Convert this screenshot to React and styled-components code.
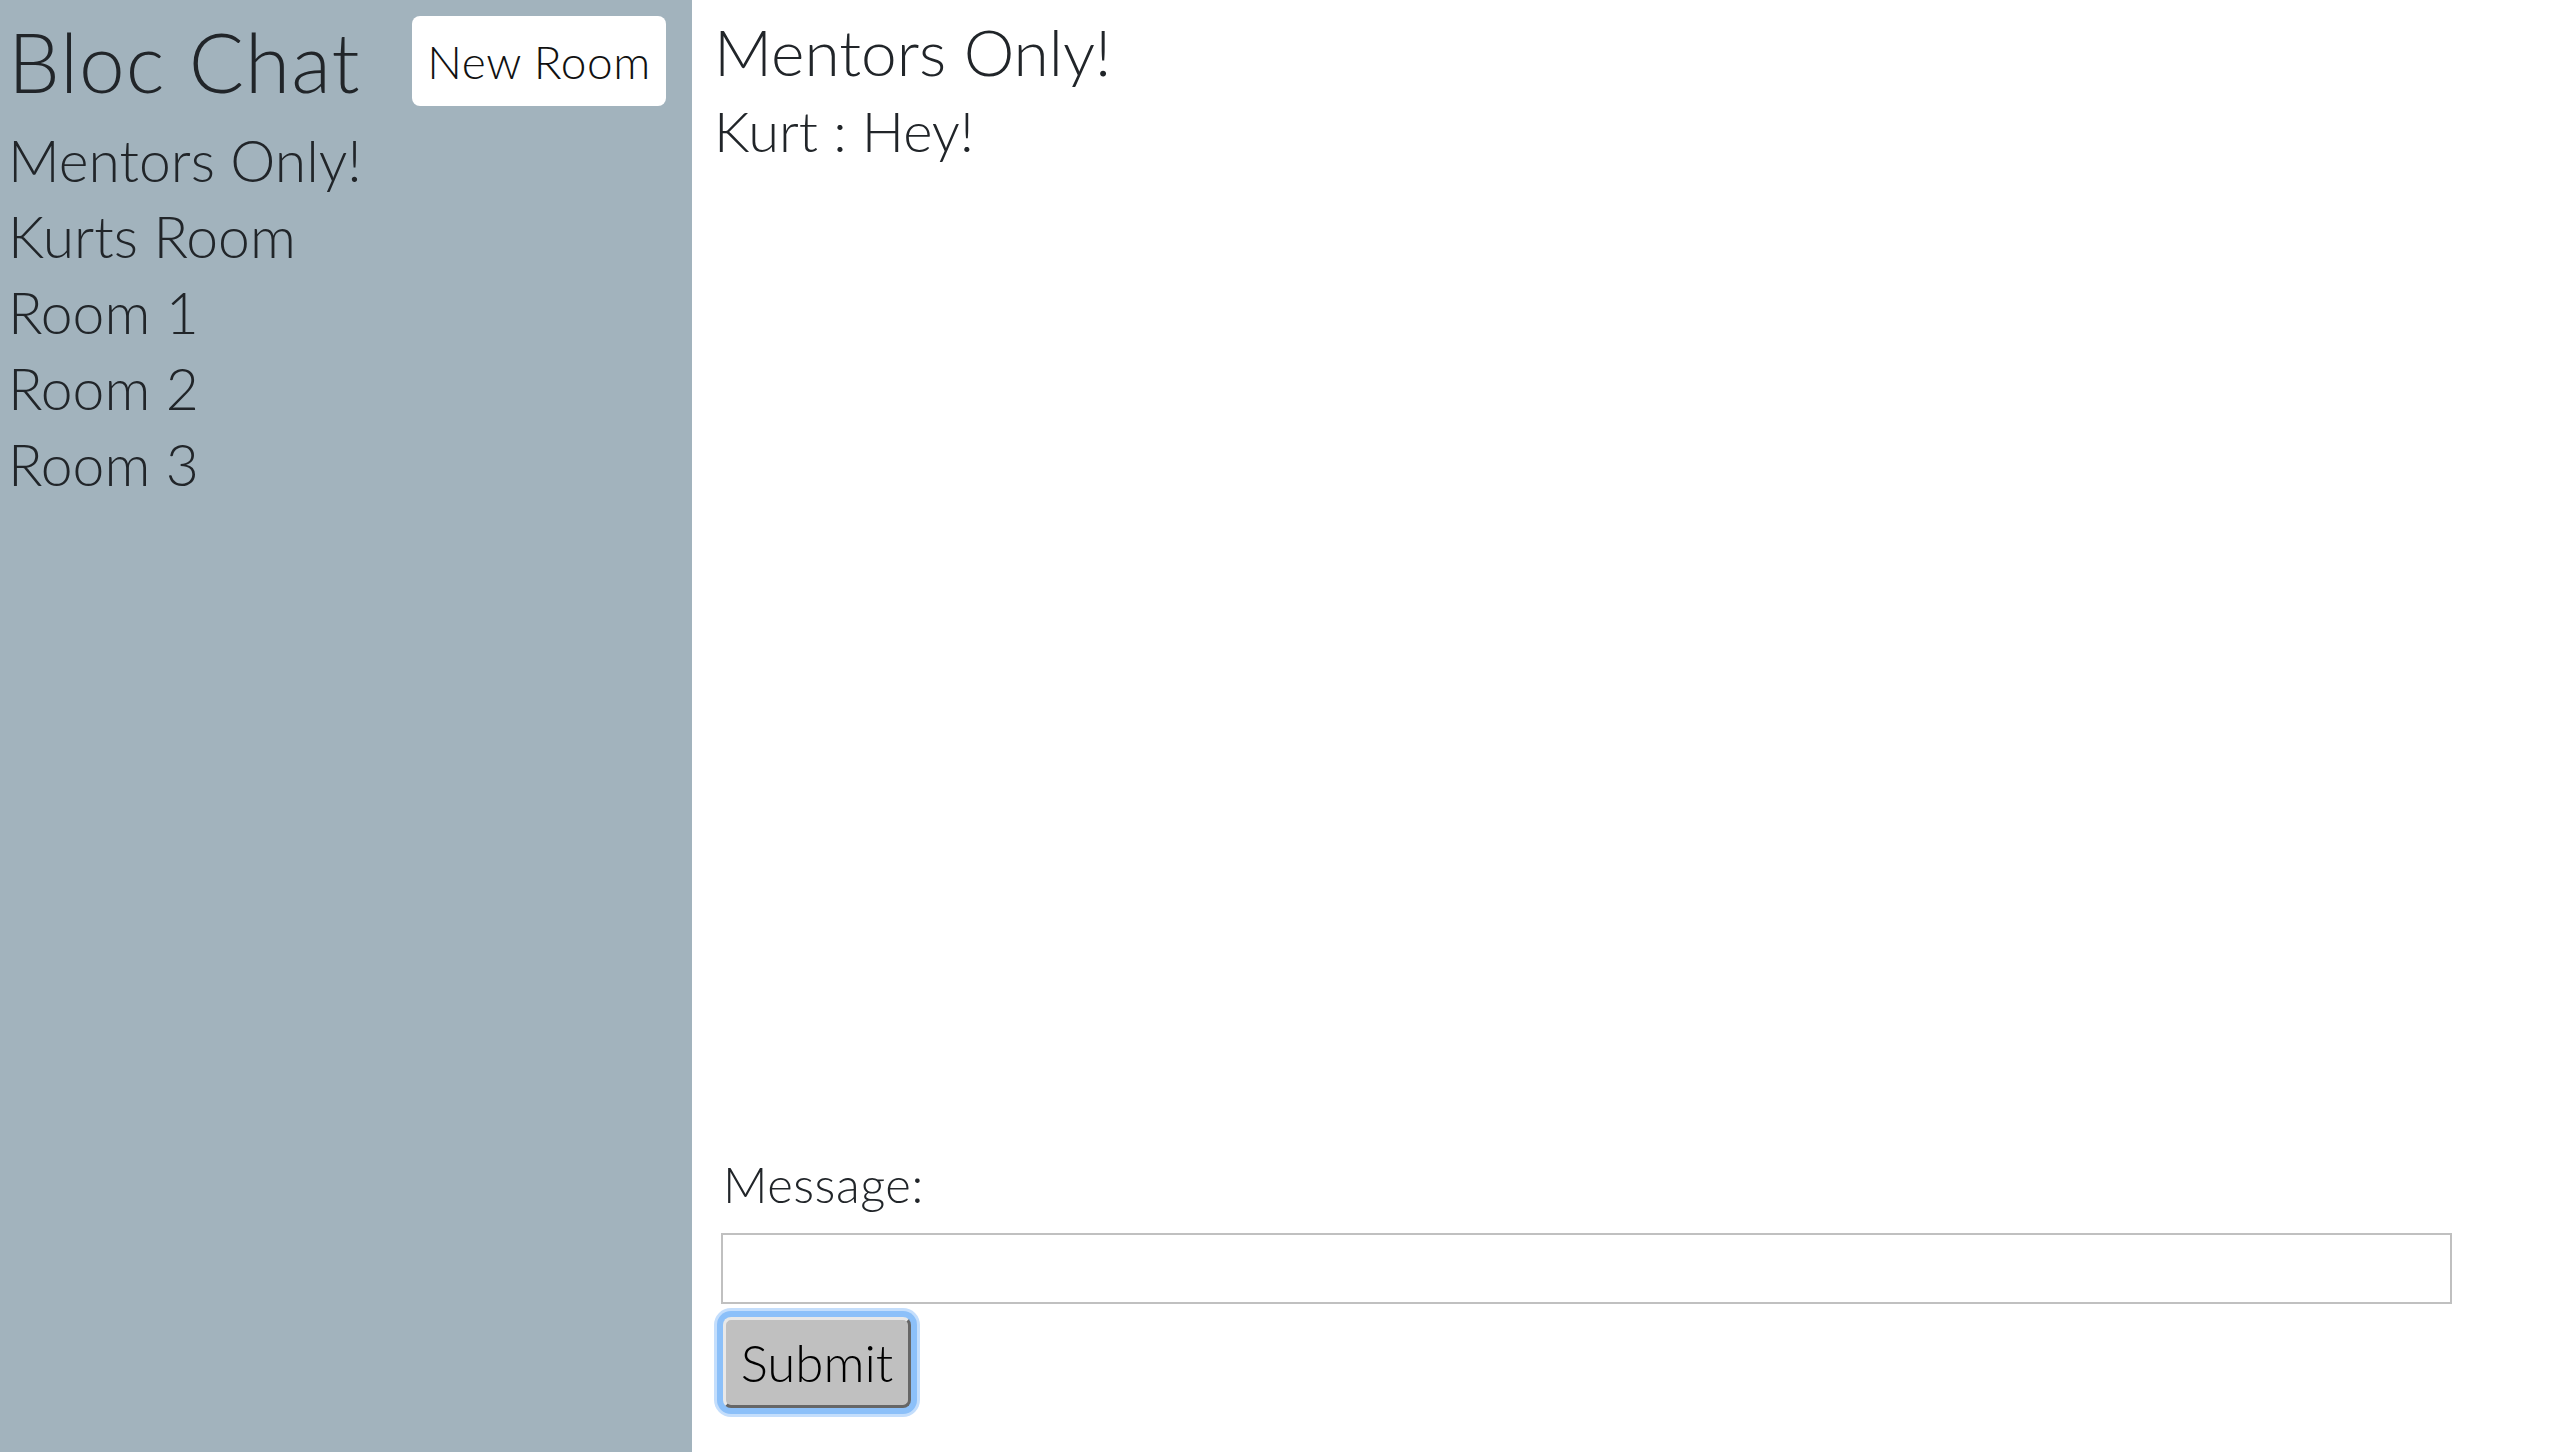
import React from 'react';
import styled, {createGlobalStyle} from 'styled-components';

const rooms = ['Mentors Only!', 'Kurts Room', 'Room 1', 'Room 2', 'Room 3'];
const messages = [{user: 'Kurt', text: 'Hey!'}];

const Global = createGlobalStyle`
    body {
        margin: 0;
        font-family: Lato, "Open Sans", sans-serif;
        font-weight: 300;
        color: #212529;
    }
`;

const Page = styled.div`
    display: flex;
    height: 1452px;
`;

const Sidebar = styled.aside`
    width: 692px;
    flex-shrink: 0;
    background-color: #a2b3bd;
    padding: 16px 0 0 8px;
    box-sizing: border-box;
`;

const Header = styled.div`
    display: flex;
    align-items: center;
    justify-content: space-between;
    padding-right: 26px;
`;

const Title = styled.h1`
    margin: 0;
    font-size: 82px;
    font-weight: 300;
    line-height: 90px;
    letter-spacing: 1px;
`;

const NewRoom = styled.button`
    height: 90px;
    width: 254px;
    padding: 0;
    background: #ffffff;
    border: none;
    border-radius: 8px;
    font-family: inherit;
    font-weight: 300;
    font-size: 46px;
    letter-spacing: 0.5px;
    color: #111;
`;

const RoomList = styled.ul`
    list-style: none;
    margin: 16px 0 0;
    padding: 0;
`;

const Room = styled.li`
    font-size: 57px;
    line-height: 76px;
`;

const Main = styled.main`
    flex: 1;
    display: flex;
    flex-direction: column;
    padding: 12px 0 44px 22px;
`;

const RoomTitle = styled.h2`
    margin: 0;
    font-size: 64px;
    font-weight: 300;
    line-height: 80px;
`;

const Message = styled.div`
    font-size: 56px;
    line-height: 70px;
    margin-top: 4px;
`;

const Form = styled.form`
    margin-top: auto;
    display: flex;
    flex-direction: column;
    align-items: flex-start;
    padding-left: 9px;
`;

const Label = styled.label`
    font-size: 49px;
    line-height: 60px;
    letter-spacing: 0.5px;
`;

const Input = styled.input`
    width: 1731px;
    height: 71px;
    margin: 19px 0 0 -2px;
    box-sizing: border-box;
    border: 2px solid #c0c0c0;
    font-size: 40px;
`;

const Submit = styled.button`
    margin: 13px 0 0 0;
    width: 188px;
    height: 91px;
    box-sizing: border-box;
    background: #c0c0c0;
    border: 3px solid;
    border-color: #e8e8e8 #666 #666 #e8e8e8;
    border-radius: 8px;
    box-shadow: 0 0 0 6px #8cc0f9, 0 0 0 9px #c4defc;
    font-family: inherit;
    font-weight: 300;
    font-size: 51px;
    color: #000;
`;

export default class App extends React.Component {
    render() {
        const list = rooms.map((r, i) => <Room key={i}>{r}</Room>);
        const msgs = messages.map((m, i) => (
            <Message key={i}>{m.user} : {m.text}</Message>
        ));
        return (
            <Page>
                <Global />
                <Sidebar>
                    <Header>
                        <Title>Bloc Chat</Title>
                        <NewRoom>New Room</NewRoom>
                    </Header>
                    <RoomList>
                        {list}
                    </RoomList>
                </Sidebar>
                <Main>
                    <RoomTitle>Mentors Only!</RoomTitle>
                    {msgs}
                    <Form onSubmit={e => e.preventDefault()}>
                        <Label>Message:</Label>
                        <Input type="text" />
                        <Submit type="submit">Submit</Submit>
                    </Form>
                </Main>
            </Page>
        );
    }
}
